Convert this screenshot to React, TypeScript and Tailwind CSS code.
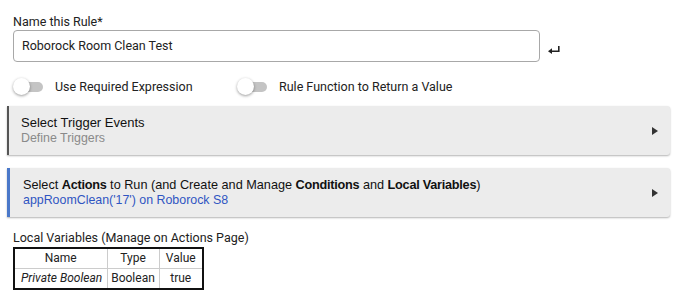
import React from 'react'

function Toggle({ label }: { label: string }) {
  return (
    <div className="flex items-center">
      <div className="relative w-[30px] h-[18px] flex items-center">
        <div className="ml-[7px] w-[23px] h-[10px] rounded-full bg-[#c4c4c4]" />
        <div className="absolute left-0 top-0 w-[17px] h-[17px] rounded-full bg-white shadow-[0_1px_3px_rgba(0,0,0,0.4)]" />
      </div>
      <span className="ml-[12px] text-[12.5px] text-[#222]">{label}</span>
    </div>
  )
}

function Arrow() {
  return (
    <svg width="6" height="8" viewBox="0 0 6 8" className="shrink-0">
      <polygon points="0,0 6,4 0,8" fill="#333" />
    </svg>
  )
}

export default function App() {
  return (
    <div className="w-[690px] h-[302px] bg-white overflow-hidden font-['Roboto',sans-serif] text-[#222]">
      <div className="pl-[13px] pt-[14px]">
        <div className="text-[12.5px] leading-[16px]">Name this Rule*</div>
        <div className="flex items-center">
          <div className="w-[527px] h-[32px] border border-[#a8a8a8] rounded-[4px] flex items-center pl-[8px] text-[12.5px]">
            Roborock Room Clean Test
          </div>
          <svg width="12" height="8" viewBox="0 0 12 8" className="ml-[8px] mt-[8px]">
            <path d="M10.8 0 V5.2 H3" stroke="#222" strokeWidth="1.6" fill="none" />
            <polygon points="0,5.2 4,2.2 4,8" fill="#222" />
          </svg>
        </div>
        <div className="flex items-center mt-[16px] h-[18px]">
          <div className="w-[224px]">
            <Toggle label="Use Required Expression" />
          </div>
          <Toggle label="Rule Function to Return a Value" />
        </div>
      </div>

      <div className="ml-[7px] w-[663px] mt-[10px] bg-[#ececec] border-l-2 border-[#555] rounded-r-[3px] shadow-[0_1px_2px_rgba(0,0,0,0.3)] h-[49px] flex items-center pl-[12px] pr-[12px] font-['Liberation_Sans',Arial,sans-serif]">
        <div className="flex-1 leading-[14.5px]">
          <div className="text-[13px] text-[#111]">Select Trigger Events</div>
          <div className="text-[12.4px] text-[#8a8a8a]">Define Triggers</div>
        </div>
        <Arrow />
      </div>

      <div className="ml-[7px] w-[663px] mt-[13px] bg-[#ececec] border-l-[3px] border-[#4a78c9] rounded-r-[3px] shadow-[0_1px_2px_rgba(0,0,0,0.3)] h-[49px] flex items-center pl-[13px] pr-[12px] font-['Liberation_Sans',Arial,sans-serif]">
        <div className="flex-1 leading-[14.5px]">
          <div className="text-[12.7px] text-[#111]">
            Select <b className="tracking-[-0.25px]">Actions</b> to Run (and Create and Manage{' '}
            <b className="tracking-[-0.25px]">Conditions</b> and <b className="tracking-[-0.25px]">Local Variables</b>)
          </div>
          <div className="text-[12.4px] text-[#2f55c2]">appRoomClean('17') on Roborock S8</div>
        </div>
        <Arrow />
      </div>

      <div className="pl-[13px] mt-[13px]">
        <div className="text-[12.5px] leading-[16px]">Local Variables (Manage on Actions Page)</div>
        <table className="border-2 border-[#111] border-collapse text-[12px] mt-[1px] table-fixed w-[189px]">
          <thead>
            <tr className="h-[20px]">
              <th className="font-normal border border-[#ccc] w-[93px] p-0 leading-[19px]">Name</th>
              <th className="font-normal border border-[#ccc] w-[52px] p-0 leading-[19px]">Type</th>
              <th className="font-normal border border-[#ccc] w-[44px] p-0 leading-[19px]">Value</th>
            </tr>
          </thead>
          <tbody>
            <tr className="h-[20px]">
              <td className="border border-[#ccc] pl-[6px] p-0 italic leading-[19px] whitespace-nowrap">Private Boolean</td>
              <td className="border border-[#ccc] p-0 text-center leading-[19px]">Boolean</td>
              <td className="border border-[#ccc] p-0 text-center leading-[19px]">true</td>
            </tr>
          </tbody>
        </table>
      </div>
    </div>
  )
}
